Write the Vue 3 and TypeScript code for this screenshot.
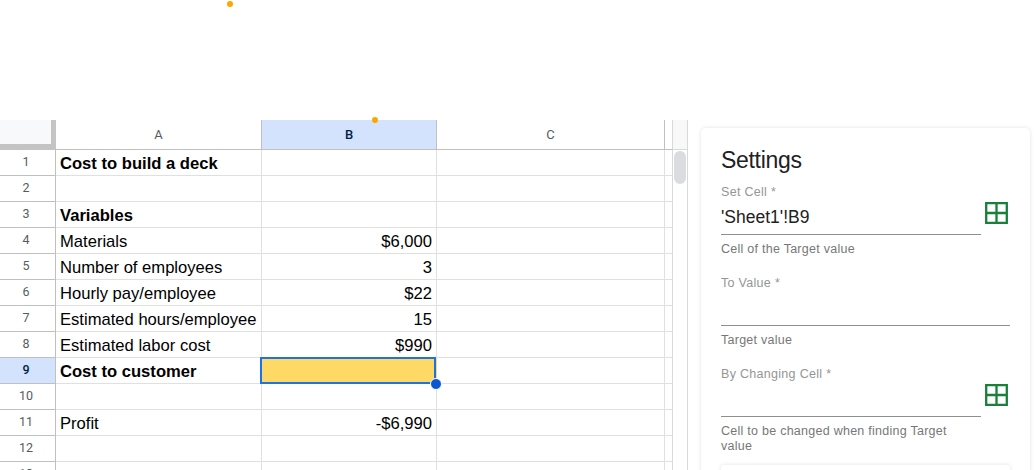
<script setup lang="ts">
interface Row {
  label?: string
  value?: string
  bold?: boolean
}

const rows: Row[] = [
  { label: 'Cost to build a deck', bold: true },
  {},
  { label: 'Variables', bold: true },
  { label: 'Materials', value: '$6,000' },
  { label: 'Number of employees', value: '3' },
  { label: 'Hourly pay/employee', value: '$22' },
  { label: 'Estimated hours/employee', value: '15' },
  { label: 'Estimated labor cost', value: '$990' },
  { label: 'Cost to customer', bold: true },
  {},
  { label: 'Profit', value: '-$6,990' },
  {},
  {},
]

const selectedRow = 8

interface Field {
  label: string
  value: string
  hint: string
  picker: boolean
}

const fields: Field[] = [
  { label: 'Set Cell *', value: "'Sheet1'!B9", hint: 'Cell of the Target value', picker: true },
  { label: 'To Value *', value: '', hint: 'Target value', picker: false },
  { label: 'By Changing Cell *', value: '', hint: 'Cell to be changed when finding Target value', picker: true },
]
</script>

<template>
  <div class="page">
    <i class="dot dot-top"></i>
    <i class="dot dot-header"></i>
    <main class="workspace">
      <section class="sheet">
        <div class="grid head">
          <div class="corner"></div>
          <div class="col">A</div>
          <div class="col active">B</div>
          <div class="col">C</div>
          <div class="edge"></div>
        </div>
        <div v-for="(row, i) in rows" :key="i" class="grid row">
          <div class="num" :class="{ active: i === selectedRow }">{{ i + 1 }}</div>
          <div class="cell" :class="{ bold: row.bold }">{{ row.label }}</div>
          <div class="cell value" :class="{ selected: i === selectedRow }">
            {{ row.value }}
            <template v-if="i === selectedRow">
              <span class="outline"></span>
              <span class="handle"></span>
            </template>
          </div>
          <div class="cell"></div>
          <div class="edge"></div>
        </div>
      </section>
      <div class="scroll">
        <div class="scroll-top"></div>
        <div class="thumb"></div>
      </div>
      <aside class="panel">
        <h1>Settings</h1>
        <div v-for="field in fields" :key="field.label" class="field">
          <div class="control">
            <div class="input">
              <div class="label">{{ field.label }}</div>
              <div class="text">{{ field.value }}</div>
            </div>
            <svg v-if="field.picker" class="picker" width="23" height="22" viewBox="0 0 23 22">
              <path d="M1.2 1.1H21.8V20.9H1.2ZM11.5 1V21M1 11H22" fill="none" stroke="#188038" stroke-width="2.3" />
            </svg>
          </div>
          <div class="hint">{{ field.hint }}</div>
        </div>
        <div class="next-card"></div>
      </aside>
    </main>
  </div>
</template>

<style>
body {
  margin: 0;
  background: #fff;
  overflow: hidden;
}
</style>

<style scoped>
.page {
  position: relative;
  box-sizing: border-box;
  width: 1035px;
  height: 470px;
  padding-top: 120px;
  overflow: hidden;
  background: #fff;
}
.page * {
  box-sizing: border-box;
}
.dot {
  position: absolute;
  z-index: 2;
  width: 6px;
  height: 6px;
  border-radius: 50%;
  background: #ffa500;
}
.dot-top {
  left: 227px;
  top: 1px;
}
.dot-header {
  left: 372px;
  top: 117px;
}
.workspace {
  display: flex;
  height: 350px;
}
.sheet {
  flex: none;
  width: 673px;
  font-family: "Liberation Sans", Arial, sans-serif;
}
.grid {
  display: grid;
  grid-template-columns: 56px 206px 175px 228px 8px;
}
.head {
  height: 30px;
}
.corner {
  border-right: 5px solid #c4c4c4;
  border-bottom: 6px solid #c4c4c4;
  background: #f8f9fa;
  background-clip: padding-box;
}
.col {
  border-right: 1px solid #c0c0c0;
  border-bottom: 1px solid #c0c0c0;
  font: 13px/29px Roboto, sans-serif;
  text-align: center;
  color: #575b5f;
}
.col.active {
  background: #d3e3fd;
  color: #041e49;
  font-weight: 500;
}
.edge {
  border-right: 1px solid #d9d9d9;
  border-bottom: 1px solid #e0e0e0;
}
.head .edge {
  border-bottom-color: #c0c0c0;
}
.row {
  grid-template-rows: 26px;
}
.num {
  border-right: 1px solid #c0c0c0;
  border-bottom: 1px solid #c0c0c0;
  padding-right: 3px;
  font: 12.5px/24px Roboto, sans-serif;
  text-align: center;
  color: #575b5f;
}
.num.active {
  background: #d3e3fd;
  color: #041e49;
  font-weight: 500;
}
.cell {
  border-right: 1px solid #e0e0e0;
  border-bottom: 1px solid #e0e0e0;
  padding: 0 4px;
  font-size: 16.6px;
  line-height: 27px;
  white-space: nowrap;
  color: #000;
}
.bold {
  font-weight: 700;
}
.value {
  position: relative;
  text-align: right;
}
.selected {
  border-right-color: #ffd966;
  background: #ffd966;
}
.outline {
  position: absolute;
  left: -2px;
  top: -1px;
  width: 176px;
  height: 27px;
  border: 2px solid #1a73e8;
}
.handle {
  position: absolute;
  z-index: 1;
  right: -6px;
  bottom: -7px;
  width: 12px;
  height: 12px;
  border: 1px solid #fff;
  border-radius: 50%;
  background: #0b57d0;
}
.scroll {
  flex: none;
  width: 15px;
  border-right: 1px solid #d9d9d9;
}
.scroll-top {
  height: 30px;
  border-bottom: 1px solid #d9d9d9;
  background: #f8f8f8;
}
.thumb {
  width: 12px;
  height: 33px;
  margin: 1px 0 0 1px;
  border-radius: 6px;
  background: #dadce0;
}
.panel {
  flex: none;
  width: 329px;
  height: 380px;
  margin: 8px 0 0 13px;
  padding: 18px 20px 0;
  border-radius: 5px;
  box-shadow: 0 0 4px rgba(0, 0, 0, 0.12);
  font-family: "Liberation Sans", Arial, sans-serif;
}
h1 {
  height: 28px;
  margin: 0;
  font-size: 23px;
  font-weight: 400;
  line-height: 29px;
  letter-spacing: -0.3px;
  color: #202124;
}
.field {
  height: 91px;
}
.control {
  display: flex;
  gap: 4px;
  height: 61px;
  padding-top: 9px;
}
.input {
  flex: 1;
  height: 52px;
  border-bottom: 1px solid #8f8f8f;
}
.label {
  height: 18px;
  font-size: 12.5px;
  line-height: 18px;
  letter-spacing: 0.3px;
  color: #959595;
}
.text {
  height: 30px;
  font-size: 17.5px;
  line-height: 32px;
  color: #212121;
}
.picker {
  flex: none;
  margin: 19px 2px 0 0;
}
.hint {
  width: 250px;
  padding-top: 7px;
  font-size: 12.5px;
  line-height: 15px;
  letter-spacing: 0.26px;
  color: #777;
}
.next-card {
  height: 30px;
  margin-top: 18px;
  border-radius: 3px;
  box-shadow: 0 0 4px rgba(0, 0, 0, 0.12);
}
</style>
